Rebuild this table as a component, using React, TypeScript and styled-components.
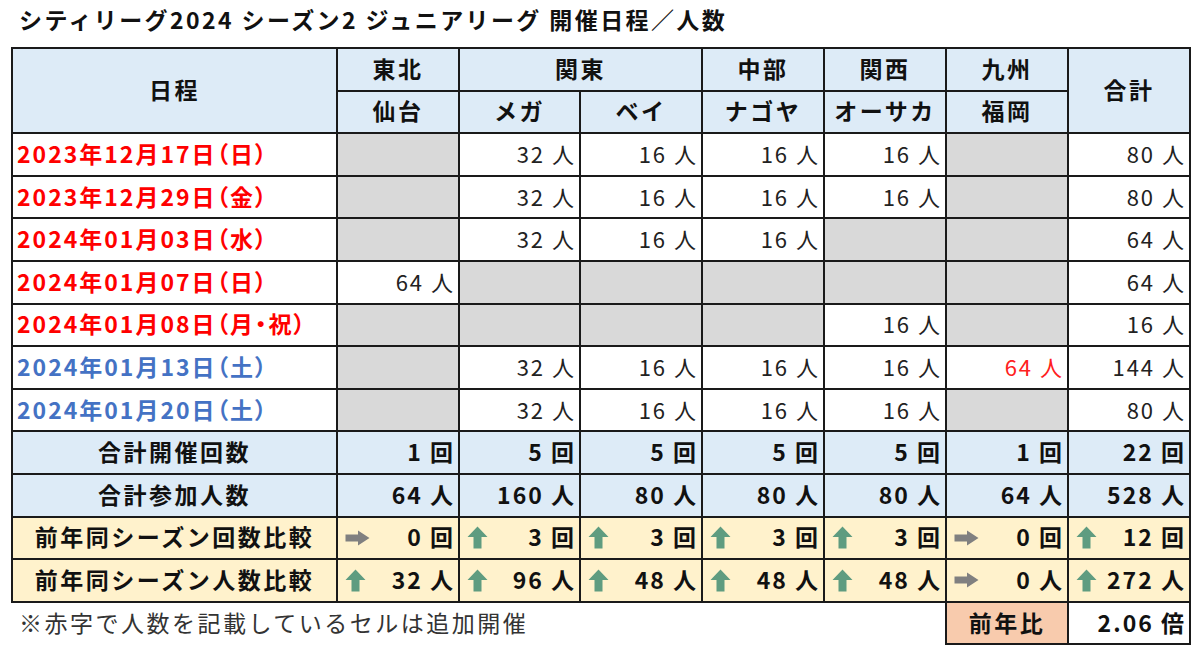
import styled, { createGlobalStyle, css } from 'styled-components'

const GlobalStyle = createGlobalStyle`
  html,
  body {
    margin: 0;
    background: #fff;
  }
  body {
    font-family: 'Noto Sans CJK JP', 'Noto Sans', sans-serif;
    color: #111;
  }
`

const Page = styled.main`
  box-sizing: border-box;
  width: 1200px;
  height: 652px;
  padding: 0 0 0 11px;
  overflow: hidden;
`

const Title = styled.h1`
  height: 47px;
  margin: 0;
  padding-left: 8px;
  font-size: 23px;
  font-weight: 700;
  line-height: 39px;
  letter-spacing: 2.4px;
  white-space: nowrap;
`

const Sheet = styled.table`
  width: 1178px;
  table-layout: fixed;
  border-collapse: collapse;
`

const Col = styled.col<{ $w: number }>`
  width: ${({ $w }) => $w}px;
`

const Row = styled.tr`
  height: 42.6px;
`

type Fill = 'head' | 'cmp'
const FILL: Record<Fill, string> = { head: '#ddebf7', cmp: '#fff2cc' }

const cellBase = css`
  padding: 0 3px 3px 4px;
  border: 2px solid #1a1a1a;
  white-space: nowrap;
  overflow: hidden;
`

const Head = styled.th`
  ${cellBase}
  padding-left: 0;
  padding-right: 0;
  font-size: 23px;
  font-weight: 700;
  letter-spacing: 2.5px;
  text-align: center;
  background: #ddebf7;
`

const DateCell = styled.td<{ $tone: 'red' | 'blue' }>`
  ${cellBase}
  font-size: 23px;
  font-weight: 700;
  letter-spacing: 2px;
  font-feature-settings: 'palt';
  color: ${({ $tone }) => ($tone === 'red' ? '#ff0000' : '#4472c4')};
  text-align: left;
  background: #fff;
`

const Count = styled.td<{ $blank?: boolean; $red?: boolean }>`
  ${cellBase}
  font-size: 22px;
  letter-spacing: 2px;
  color: ${({ $red }) => ($red ? '#ff2020' : '#222')};
  text-align: right;
  background: ${({ $blank }) => ($blank ? '#d9d9d9' : '#fff')};
`

const Label = styled.td<{ $fill: Fill }>`
  ${cellBase}
  padding-left: 0;
  padding-right: 0;
  font-size: 23px;
  font-weight: 700;
  letter-spacing: 2.5px;
  text-align: center;
  background: ${({ $fill }) => FILL[$fill]};
`

const Total = styled.td<{ $fill: Fill | 'plain' }>`
  ${cellBase}
  font-size: 23px;
  font-weight: 700;
  letter-spacing: 2px;
  color: #111;
  text-align: right;
  background: ${({ $fill }) => ($fill === 'plain' ? '#fff' : FILL[$fill])};
`

const Split = styled.div`
  display: flex;
  align-items: center;
  justify-content: space-between;
  padding-left: 3px;
`

const Mark = styled.svg`
  flex: none;
  margin-top: 3px;
`

const Ratio = styled.td`
  ${cellBase}
  padding-left: 0;
  padding-right: 0;
  font-size: 23px;
  font-weight: 700;
  letter-spacing: 2.5px;
  text-align: center;
  background: #f8cbad;
`

const Note = styled.td`
  padding: 0 0 3px 7px;
  border: none;
  font-size: 23px;
  letter-spacing: 2.5px;
  color: #333;
  text-align: left;
  white-space: nowrap;
`

const Up = () => (
  <Mark width="21" height="23" viewBox="0 0 21 23">
    <path d="M10.5 0.5 L20.5 11 H14.5 V22.5 H6.5 V11 H0.5 Z" fill="#5f9c80" />
  </Mark>
)

const Right = () => (
  <Mark width="25" height="16" viewBox="0 0 25 16">
    <path d="M0.5 4.5 H13 V0.5 L24.5 8 L13 15.5 V11.5 H0.5 Z" fill="#808080" />
  </Mark>
)

type Day = { date: string; tone: 'red' | 'blue'; cells: (number | null)[]; red?: number; total: number }

const DAYS: Day[] = [
  { date: '2023年12月17日（日）', tone: 'red', cells: [null, 32, 16, 16, 16, null], total: 80 },
  { date: '2023年12月29日（金）', tone: 'red', cells: [null, 32, 16, 16, 16, null], total: 80 },
  { date: '2024年01月03日（水）', tone: 'red', cells: [null, 32, 16, 16, null, null], total: 64 },
  { date: '2024年01月07日（日）', tone: 'red', cells: [64, null, null, null, null, null], total: 64 },
  { date: '2024年01月08日（月・祝）', tone: 'red', cells: [null, null, null, null, 16, null], total: 16 },
  { date: '2024年01月13日（土）', tone: 'blue', cells: [null, 32, 16, 16, 16, 64], red: 5, total: 144 },
  { date: '2024年01月20日（土）', tone: 'blue', cells: [null, 32, 16, 16, 16, null], total: 80 },
]

type Trend = 'up' | 'flat'
type Summary = { label: string; fill: Fill; unit: string; values: number[]; trend?: Trend[] }

const SUMMARY: Summary[] = [
  { label: '合計開催回数', fill: 'head', unit: '回', values: [1, 5, 5, 5, 5, 1, 22] },
  { label: '合計参加人数', fill: 'head', unit: '人', values: [64, 160, 80, 80, 80, 64, 528] },
  {
    label: '前年同シーズン回数比較',
    fill: 'cmp',
    unit: '回',
    values: [0, 3, 3, 3, 3, 0, 12],
    trend: ['flat', 'up', 'up', 'up', 'up', 'flat', 'up'],
  },
  {
    label: '前年同シーズン人数比較',
    fill: 'cmp',
    unit: '人',
    values: [32, 96, 48, 48, 48, 0, 272],
    trend: ['up', 'up', 'up', 'up', 'up', 'flat', 'up'],
  },
]

const WIDTHS = [325, 122, 121, 122, 122, 122, 122, 122]

const App = () => {
  return (
    <Page>
      <GlobalStyle />
      <Title>シティリーグ2024 シーズン2 ジュニアリーグ 開催日程／人数</Title>
      <Sheet>
        <colgroup>
          {WIDTHS.map((w, i) => (
            <Col key={i} $w={w} />
          ))}
        </colgroup>
        <thead>
          <Row>
            <Head rowSpan={2}>日程</Head>
            <Head>東北</Head>
            <Head colSpan={2}>関東</Head>
            <Head>中部</Head>
            <Head>関西</Head>
            <Head>九州</Head>
            <Head rowSpan={2}>合計</Head>
          </Row>
          <Row>
            <Head>仙台</Head>
            <Head>メガ</Head>
            <Head>ベイ</Head>
            <Head>ナゴヤ</Head>
            <Head>オーサカ</Head>
            <Head>福岡</Head>
          </Row>
        </thead>
        <tbody>
          {DAYS.map((d) => (
            <Row key={d.date}>
              <DateCell $tone={d.tone}>{d.date}</DateCell>
              {d.cells.map((n, i) => (
                <Count key={i} $blank={n === null} $red={d.red === i}>
                  {n === null ? '' : `${n} 人`}
                </Count>
              ))}
              <Count>{d.total} 人</Count>
            </Row>
          ))}
          {SUMMARY.map((s) => (
            <Row key={s.label}>
              <Label $fill={s.fill}>{s.label}</Label>
              {s.values.map((v, i) => (
                <Total key={i} $fill={s.fill}>
                  {s.trend ? (
                    <Split>
                      {s.trend[i] === 'up' ? <Up /> : <Right />}
                      <span>
                        {v} {s.unit}
                      </span>
                    </Split>
                  ) : (
                    `${v} ${s.unit}`
                  )}
                </Total>
              ))}
            </Row>
          ))}
          <Row>
            <Note colSpan={6}>※赤字で人数を記載しているセルは追加開催</Note>
            <Ratio>前年比</Ratio>
            <Total $fill="plain">2.06 倍</Total>
          </Row>
        </tbody>
      </Sheet>
    </Page>
  )
}

export default App
